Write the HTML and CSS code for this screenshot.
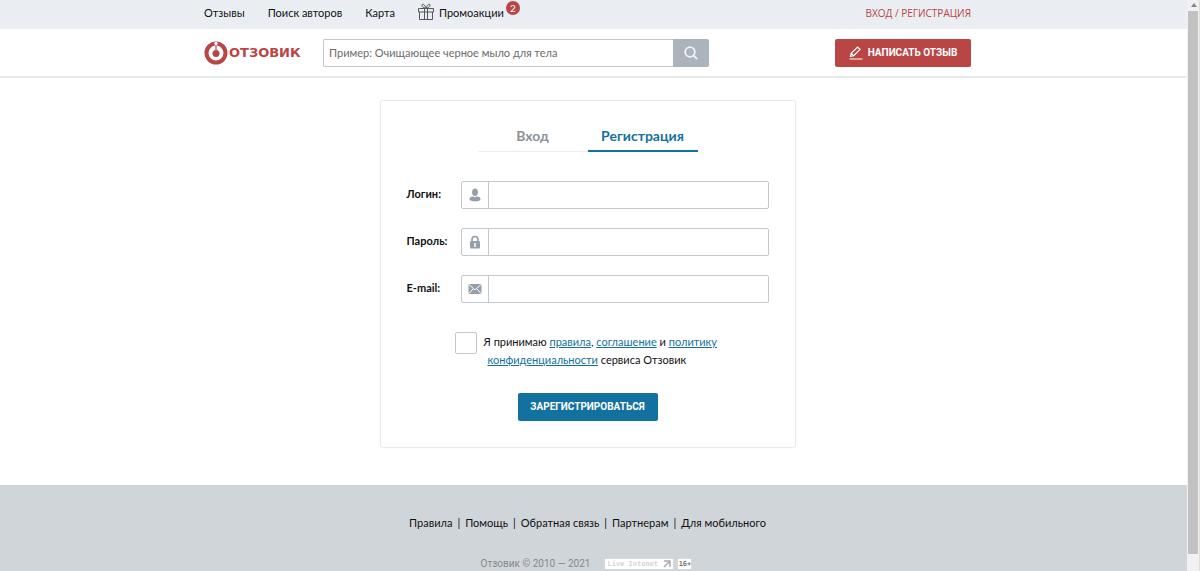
FILE: index.html
```html
<!DOCTYPE html>
<html lang="ru">
<head>
<meta charset="utf-8">
<title>Регистрация — Отзовик</title>
<link rel="stylesheet" href="styles.css">
</head>
<body>
<div class="page">
  <div class="topbar">
    <div class="wrap topbar-row">
      <nav class="nav">
        <a href="#">Отзывы</a>
        <a href="#">Поиск авторов</a>
        <a href="#">Карта</a>
        <a href="#" class="promo">
          <svg class="gift" viewBox="0 0 16 17" width="16" height="17" fill="none" stroke="#55585b" stroke-width="1"><path d="M.5 5.500h15v3.500H.5zM1.500 9v7.500h13V9M6.500 5.500v11M9.500 5.500v11M8 5C6 5 3.500 4 4 2S7 2 8 5c1-3 3.500-5 4-3s-2 3-4 3z"/></svg>
          Промоакции<span class="badge">2</span>
        </a>
      </nav>
      <a href="#" class="login">ВХОД / РЕГИСТРАЦИЯ</a>
    </div>
  </div>
  <header class="header">
    <div class="wrap header-row">
      <a href="#" class="logo">
        <svg viewBox="0 0 24 24" width="24" height="24"><circle cx="12" cy="12" r="9.500" fill="#fff" stroke="#b94545" stroke-width="4"/><circle cx="12" cy="12.500" r="3.500" fill="#b94545"/><path d="M12 5v8" stroke="#b94545" stroke-width="1.200"/><circle cx="12" cy="2.500" r="1.700" fill="#fff"/></svg>
        <span>ОТЗОВИК</span>
      </a>
      <form class="search">
        <input type="text" aria-label="Поиск" placeholder="Пример: Очищающее черное мыло для тела">
        <button type="button" aria-label="Найти"><svg viewBox="0 0 14 14" width="14" height="14" fill="none" stroke="#f1f3f5" stroke-width="1.800"><circle cx="6" cy="6" r="4.800"/><path d="M9.500 9.500l3.700 3.700"/></svg></button>
      </form>
      <button type="button" class="write"><svg viewBox="0 0 14 14" width="14" height="14" fill="none" stroke="#fff" stroke-width="1.200"><path d="M1.500 10.500l.7-3.200L8.600 1l2.400 2.300-6.300 6.300zM2.200 7.300l2.500 2.300M.5 13h13"/></svg>НАПИСАТЬ ОТЗЫВ</button>
    </div>
  </header>
  <main class="main">
    <form class="card">
      <div class="tabs">
        <a href="#" class="tab">Вход</a>
        <a href="#" class="tab active">Регистрация</a>
      </div>
      <div class="field">
        <label for="login">Логин:</label>
        <div class="box">
          <span class="icon"><svg viewBox="0 0 14 14" width="14" height="14" fill="#959fab"><ellipse cx="7" cy="4.300" rx="2.900" ry="3.800"/><path d="M1.500 11c0-2 2.500-2.500 4-2.500 1 .7 2 .7 3 0 1.500 0 4 .5 4 2.500s-2.500 2.300-5.500 2.300S1.500 13 1.500 11z"/></svg></span>
          <input id="login" type="text">
        </div>
      </div>
      <div class="field">
        <label for="password">Пароль:</label>
        <div class="box">
          <span class="icon"><svg viewBox="0 0 14 14" width="14" height="14"><path d="M4 7V4.500a3 3 0 0 1 6 0V7" fill="none" stroke="#959fab" stroke-width="1.700"/><rect x="2" y="6" width="10" height="7.500" rx="1" fill="#959fab"/><path d="M7 8v4" stroke="#fff" stroke-width="1.500"/></svg></span>
          <input id="password" type="password">
        </div>
      </div>
      <div class="field">
        <label for="email">E-mail:</label>
        <div class="box">
          <span class="icon"><svg viewBox="0 0 14 14" width="14" height="14"><rect x=".5" y="2" width="13" height="10" rx="1" fill="#959fab"/><path d="M1 2.500l6 5.500 6-5.500M1 11.500L5 7M13 11.500L9 7" fill="none" stroke="#fff"/></svg></span>
          <input id="email" type="email">
        </div>
      </div>
      <div class="agree">
        <input type="checkbox" id="agree">
        <label for="agree">Я принимаю <a href="#">правила</a>, <a href="#">соглашение</a> и <a href="#">политику</a> <span class="second"><a href="#">конфиденциальности</a> сервиса Отзовик</span></label>
      </div>
      <button type="button" class="submit">ЗАРЕГИСТРИРОВАТЬСЯ</button>
    </form>
  </main>
  <footer class="footer">
    <nav class="foot-nav">
      <a href="#">Правила</a><span>|</span><a href="#">Помощь</a><span>|</span><a href="#">Обратная связь</a><span>|</span><a href="#">Партнерам</a><span>|</span><a href="#">Для мобильного</a>
    </nav>
    <div class="legal">
      <span class="copy">Отзовик © 2010 — 2021</span>
      <span class="counter">Live Intenet<svg viewBox="0 0 8 8" width="8" height="8" fill="none" stroke="#aaa" stroke-width="1.500"><path d="M1 1h6v6M7 1L1 7"/></svg></span>
      <span class="age">16+</span>
    </div>
  </footer>
</div>
<div class="scrollbar" aria-hidden="true">
  <svg viewBox="0 0 12 11" width="12" height="11"><path d="M3 7l3-4 3 4z" fill="#858585"/></svg>
  <div class="thumb"></div>
</div>
</body>
</html>
```
FILE: styles.css
```css
* { box-sizing: border-box; }
body {
  margin: 0;
  height: 100vh;
  display: flex;
  overflow: hidden;
  background: #fff;
  color: #111;
  font: 11px/18px Lato, "Open Sans", sans-serif;
}
a { color: inherit; text-decoration: none; }
input, button { font: inherit; margin: 0; }
button { border: 0; padding: 0; cursor: pointer; }
svg { display: block; flex: none; }
.page { flex: 1; min-width: 0; display: flex; flex-direction: column; }
.topbar, .header, .main, .footer { padding-right: 12px; }
.wrap { width: 100%; max-width: 767px; margin: 0 auto; }
.topbar { background: #eaeef2; }
.topbar-row { height: 29px; display: flex; align-items: center; justify-content: space-between; padding-bottom: 3px; }
.nav { display: flex; align-items: center; gap: 23px; }
.promo { position: relative; display: flex; align-items: center; }
.gift { margin: 0 5px 4px 0; }
.badge {
  position: absolute;
  left: 100%;
  top: -2px;
  margin-left: 2px;
  width: 14px;
  height: 14px;
  border-radius: 50%;
  background: #b94545;
  color: #fff;
  font-size: 10px;
  line-height: 14px;
  text-align: center;
}
.login { color: #b94545; font: 10px/18px "Open Sans", sans-serif; }
.header { border-bottom: 2px solid #e9eaeb; }
.header-row { display: flex; align-items: center; padding: 10px 0 9px; }
.logo {
  display: flex;
  align-items: center;
  gap: 1px;
  width: 119px;
  color: #b94545;
  font: bold 13px/16px "DejaVu Sans", sans-serif;
}
.search { display: flex; width: 386px; height: 28px; }
.search input {
  flex: 1;
  min-width: 0;
  padding: 0 5px;
  border: 1px solid #c3c8ce;
  border-right: 0;
  border-radius: 2px 0 0 2px;
}
.search input::placeholder { color: #6b6b6b; opacity: 1; }
.search button {
  display: grid;
  place-items: center;
  width: 36px;
  background: #abb3bd;
  border-radius: 0 2px 2px 0;
}
.write, .submit {
  height: 28px;
  border-radius: 2px;
  color: #fff;
  font: bold 10px/18px Roboto, sans-serif;
}
.write {
  display: flex;
  align-items: center;
  justify-content: center;
  gap: 5px;
  width: 136px;
  margin-left: auto;
  background: #b94545;
}
.main { padding-top: 22px; padding-bottom: 37px; }
.card {
  display: flex;
  flex-direction: column;
  width: 416px;
  margin: 0 auto;
  padding: 22px 26px 26px;
  border: 1px solid #e8e9ea;
  border-radius: 3px;
  box-shadow: 0 0 2px #eee;
}
.tabs { display: flex; align-self: center; margin-bottom: 29px; }
.tab {
  width: 110px;
  padding: 2px 0 4px;
  border-bottom: 1px solid #edf0f0;
  color: #8b9197;
  font-size: 14px;
  font-weight: 700;
  line-height: 21px;
  text-align: center;
}
.tab.active { border-bottom: 2px solid #12719e; color: #12719e; }
.field { display: flex; margin-bottom: 19px; }
.field > label { width: 54px; line-height: 26px; font-weight: 700; }
.box { flex: 1; display: flex; height: 28px; border: 1px solid #c3c8ce; border-radius: 2px; }
.icon { display: grid; place-items: center; width: 27px; border-right: 1px solid #c3c8ce; }
.box input { flex: 1; min-width: 0; border: 0; padding: 0 6px; background: none; }
.agree { display: flex; gap: 7px; margin: 10px 45px 24px 48px; }
.agree input { appearance: none; flex: none; width: 22px; height: 22px; border: 1px solid #c3c8ce; border-radius: 2px; background: #fff; }
.agree label { white-space: nowrap; margin-top: 1px; }
.agree a { color: #12719e; text-decoration: underline; }
.second { display: block; padding-left: 4px; }
.submit { align-self: center; width: 140px; background: #12719e; }
.footer { flex: 1; background: #d0d5d9; padding-top: 29px; }
.foot-nav { display: flex; justify-content: center; gap: 5px; }
.legal { display: flex; align-items: center; justify-content: center; margin: 23px 2px 0 0; color: #85898c; font: 10px/18px Roboto, sans-serif; }
.copy { margin-right: 14px; }
.counter, .age { display: flex; align-items: center; height: 12px; background: #fff; border: 1px solid #d8d8d8; font: bold 7px/10px "DejaVu Sans Mono", monospace; }
.counter { justify-content: space-between; width: 70px; padding: 0 2px; margin-right: 3px; color: #d5d5d5; }
.age { justify-content: center; width: 15px; color: #777; }
.scrollbar { width: 13px; padding: 0 1px; background: #f1f1f1; border-right: 1px solid #ddd; }
.thumb { height: calc(95% + 1px); background: #c1c1c1; }
```
